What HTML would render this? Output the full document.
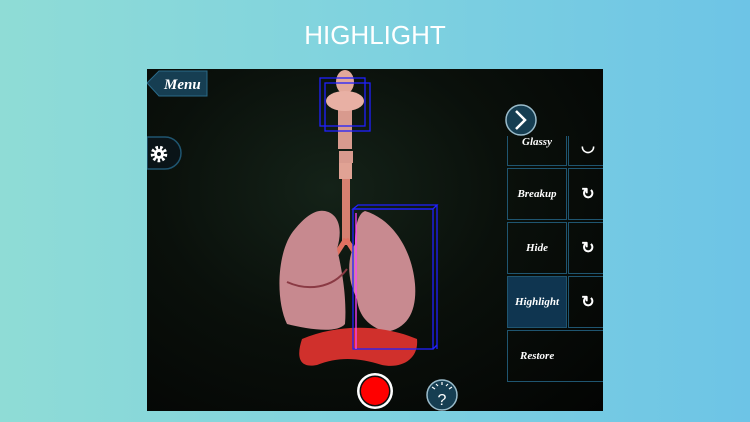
<!DOCTYPE html>
<html><head><style>
body{margin:0;width:750px;height:422px;overflow:hidden;background:linear-gradient(90deg,#8fdcd6 0%,#7fd2df 50%,#6dc4e6 100%);font-family:"Liberation Sans",sans-serif;position:relative}
.t{position:absolute;top:20px;width:750px;text-align:center;color:#fff;font-size:26px;letter-spacing:0px;font-weight:300}
.scr{position:absolute;left:147px;top:69px;width:456px;height:342px;background:radial-gradient(ellipse at 40% 35%,#142218 0%,#0a100b 45%,#030403 100%);overflow:hidden}
.b{position:absolute;border:1.5px solid #1f5570;box-sizing:border-box;color:#fff;font-family:"Liberation Serif",serif;font-style:italic;font-weight:bold;font-size:11px;display:flex;align-items:center;justify-content:center}
.r{font-style:normal;font-size:16px}
</style></head><body>
<div class="t">HIGHLIGHT</div>
<div class="scr">
<svg width="456" height="342" style="position:absolute;left:0;top:0">
 <polygon points="0,14 12,2 60,2 60,27 12,27" fill="#163e52" stroke="#2a6a88"/>
 <text x="17" y="20" fill="#fff" font-family="Liberation Serif" font-style="italic" font-weight="bold" font-size="15">Menu</text>
 <path d="M0,68 H18 A16,16 0 0 1 18,100 H0Z" fill="#0a1418" stroke="#1f5570" stroke-width="1.5"/>
 <circle cx="12" cy="85" r="6.5" fill="none" stroke="#fff" stroke-width="3.5" stroke-dasharray="2.5 2"/>
 <circle cx="12" cy="85" r="5" fill="#fff"/><circle cx="12" cy="85" r="2" fill="#0a1418"/>
 <rect x="191" y="40" width="14" height="40" fill="#d89a8e"/>
 <ellipse cx="198" cy="13" rx="9" ry="12" fill="#e2a89a"/>
 <ellipse cx="198" cy="32" rx="19" ry="10" fill="#e8b0a4"/>
 <rect x="192" y="82" width="14" height="12" fill="#d89a8e"/>
 <rect x="192" y="94" width="13" height="16" fill="#e0a294"/>
 <rect x="195" y="110" width="8" height="66" fill="#d68070"/>
 <path d="M199,170 L186,190 M199,170 L212,190" stroke="#e07060" stroke-width="5"/>
 <path d="M178,142 C192,145 196,160 190,180 C195,200 200,230 198,255 C190,265 160,260 140,255 C128,230 130,180 148,160 C158,148 168,140 178,142Z" fill="#c7898f"/>
 <path d="M218,142 C245,150 265,180 268,215 C270,240 262,260 238,263 C225,258 212,250 210,230 C200,210 200,190 208,175 C208,160 210,145 218,142Z" fill="#c88a90"/>
 <path d="M140,213 C160,222 185,220 200,200" stroke="#8a3a44" stroke-width="2" fill="none"/>
 <path d="M155,270 C190,255 235,255 270,270 C272,290 255,300 235,296 C210,288 190,288 170,296 C150,300 150,285 155,270Z" fill="#d0302c"/>
 <g stroke="#2020ff" stroke-width="1.3" fill="none">
  <rect x="173" y="9" width="45" height="48"/><rect x="178" y="14" width="45" height="48"/>
  <rect x="206" y="140" width="80" height="140"/><polygon points="206,140 211,136 290,136 286,140"/><line x1="290" y1="136" x2="290" y2="280"/><line x1="286" y1="280" x2="290" y2="276"/>
 </g>
 <line x1="209" y1="144" x2="209" y2="280" stroke="#ff40ff" stroke-width="1.3"/>
 <circle cx="228" cy="322" r="18" fill="#fff"/><circle cx="228" cy="322" r="15.5" fill="#111"/><circle cx="228" cy="322" r="14" fill="#f00"/>
 <circle cx="295" cy="326" r="15" fill="#163e52" stroke="#9abccb" stroke-width="1.5"/>
 <text x="295" y="336" fill="#fff" font-size="16" text-anchor="middle">?</text>
 <path d="M285,318 l3,2 M305,318 l-3,2 M295,313 v3 M289,315 l2,2 M301,315 l-2,2" stroke="#fff" stroke-width="1.2"/>
 <circle cx="374" cy="51" r="15" fill="#163e52" stroke="#9abccb" stroke-width="1.5"/>
 <path d="M369,42 L378,51 L369,60" stroke="#fff" stroke-width="2.5" fill="none"/>
</svg>
<div class="b" style="left:360px;top:67px;width:60px;height:30px;border-top:none;align-items:flex-start">Glassy</div>
<div class="b r" style="left:421px;top:67px;width:40px;height:30px;border-top:none;align-items:flex-start">◡</div>
<div class="b" style="left:360px;top:99px;width:60px;height:52px">Breakup</div>
<div class="b r" style="left:421px;top:99px;width:40px;height:52px">↻</div>
<div class="b" style="left:360px;top:153px;width:60px;height:52px">Hide</div>
<div class="b r" style="left:421px;top:153px;width:40px;height:52px">↻</div>
<div class="b" style="left:360px;top:207px;width:60px;height:52px;background:#0f3550">Highlight</div>
<div class="b r" style="left:421px;top:207px;width:40px;height:52px">↻</div>
<div class="b" style="left:360px;top:261px;width:100px;height:52px;justify-content:flex-start;padding-left:12px">Restore</div>
</div>
</body></html>
